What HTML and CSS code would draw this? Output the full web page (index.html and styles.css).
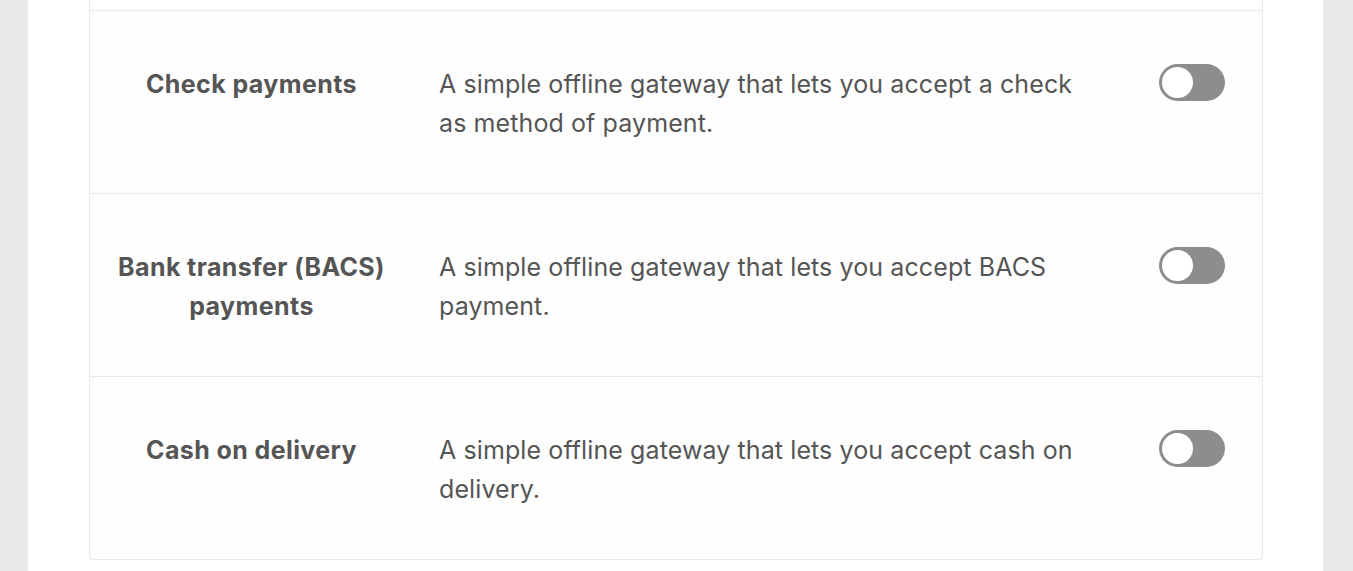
FILE: index.html
```html
<!DOCTYPE html>
<html lang="en">
<head>
    <meta charset="UTF-8">
    <title>Payments</title>
    <link rel="stylesheet" href="styles.css">
</head>
<body>
    <div class="page">
        <div class="gateways">
            <div class="row-end"></div>

            <div class="gateway">
                <div class="gateway-name">Check payments</div>
                <div class="gateway-desc">A simple offline gateway that lets you accept a check as method of payment.</div>
                <div class="toggle"><span class="knob"></span></div>
            </div>

            <div class="gateway">
                <div class="gateway-name">Bank transfer (BACS) payments</div>
                <div class="gateway-desc">A simple offline gateway that lets you accept BACS payment.</div>
                <div class="toggle"><span class="knob"></span></div>
            </div>

            <div class="gateway">
                <div class="gateway-name">Cash on delivery</div>
                <div class="gateway-desc">A simple offline gateway that lets you accept cash on delivery.</div>
                <div class="toggle"><span class="knob"></span></div>
            </div>
        </div>
    </div>
</body>
</html>
```

FILE: styles.css
```css
html, body {
    margin: 0;
    height: 100%;
}
body {
    background: #e9e9e9;
    font-family: Inter, 'Liberation Sans', Arial, sans-serif;
    color: #555555;
}
.page {
    background: #ffffff;
    margin: 0 30px 0 28px;
    min-height: 100%;
    padding: 0 60px 0 61px;
    box-sizing: border-box;
}
.gateways {
    background: #fefefe;
    border: 1px solid #e9e9e9;
    border-top: none;
    border-radius: 0 0 4px 4px;
}
.row-end {
    height: 10px;
    background: #ffffff;
}
.gateway {
    display: grid;
    grid-template-columns: 323px 660px 1fr;
    column-gap: 26px;
    align-items: start;
    border-top: 1px solid #e9e9e9;
    padding: 54px 36px 50px 0;
    height: 78px;
}
.gateway-name {
    font-size: 25px;
    font-weight: 700;
    letter-spacing: 0.4px;
    line-height: 39px;
    text-align: center;
    padding: 0 20px;
}
.gateway-desc {
    font-size: 25px;
    letter-spacing: 0.1px;
    line-height: 39px;
}
.toggle {
    justify-self: end;
    width: 66px;
    height: 37px;
    margin: -1px 1px 0 0;
    border-radius: 19px;
    background: #8d8d8d;
    box-sizing: border-box;
    padding: 3px;
}
.knob {
    display: block;
    width: 31px;
    height: 31px;
    border-radius: 50%;
    background: #ffffff;
}
```
